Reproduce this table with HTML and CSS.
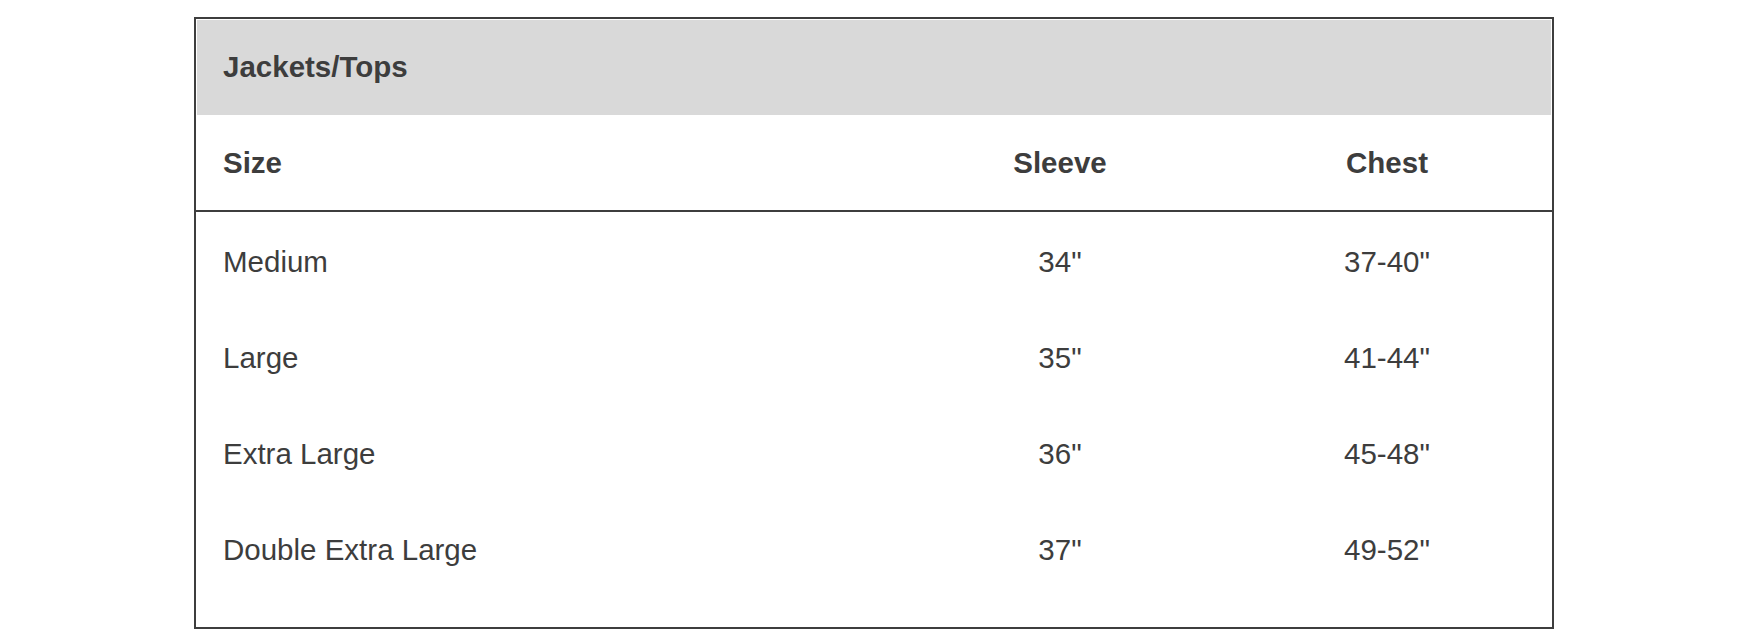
FILE: index.html
```html
<!DOCTYPE html>
<html lang="en">
<head>
<meta charset="utf-8">
<title>Jackets/Tops size chart</title>
<link rel="stylesheet" href="styles.css">
</head>
<body>
<section class="chart">
  <h2 class="chart-title">Jackets/Tops</h2>
  <div class="row head">
    <div class="cell first">Size</div>
    <div class="cell">Sleeve</div>
    <div class="cell">Chest</div>
  </div>
  <div class="body">
    <div class="row">
      <div class="cell first">Medium</div>
      <div class="cell">34"</div>
      <div class="cell">37-40"</div>
    </div>
    <div class="row">
      <div class="cell first">Large</div>
      <div class="cell">35"</div>
      <div class="cell">41-44"</div>
    </div>
    <div class="row">
      <div class="cell first">Extra Large</div>
      <div class="cell">36"</div>
      <div class="cell">45-48"</div>
    </div>
    <div class="row">
      <div class="cell first">Double Extra Large</div>
      <div class="cell">37"</div>
      <div class="cell">49-52"</div>
    </div>
  </div>
</section>
</body>
</html>
```

FILE: styles.css
```css
html, body {
  margin: 0;
  padding: 0;
  background: #ffffff;
}

body {
  font-family: "Liberation Sans", Arial, sans-serif;
  color: #3d3d3d;
  padding: 17px 0 0 194px;
}

.chart {
  width: 1360px;
  box-sizing: border-box;
  border: 2px solid #3e3e3e;
}

.chart-title {
  margin: 1px 1px 0 1px;
  height: 95px;
  box-sizing: border-box;
  padding: 0 0 2px 26px;
  background: #d9d9d9;
  display: flex;
  align-items: center;
  font-size: 29.5px;
  font-weight: 700;
}

.row {
  display: grid;
  grid-template-columns: 1fr 324px 330px;
  height: 96px;
  align-items: center;
  font-size: 29.5px;
}

.row.head {
  height: 95px;
  font-weight: 700;
  border-bottom: 2px solid #3e3e3e;
}

.body {
  padding: 2px 0 29px;
}

.cell {
  text-align: center;
}

.cell.first {
  text-align: left;
  padding-left: 27px;
}
```
